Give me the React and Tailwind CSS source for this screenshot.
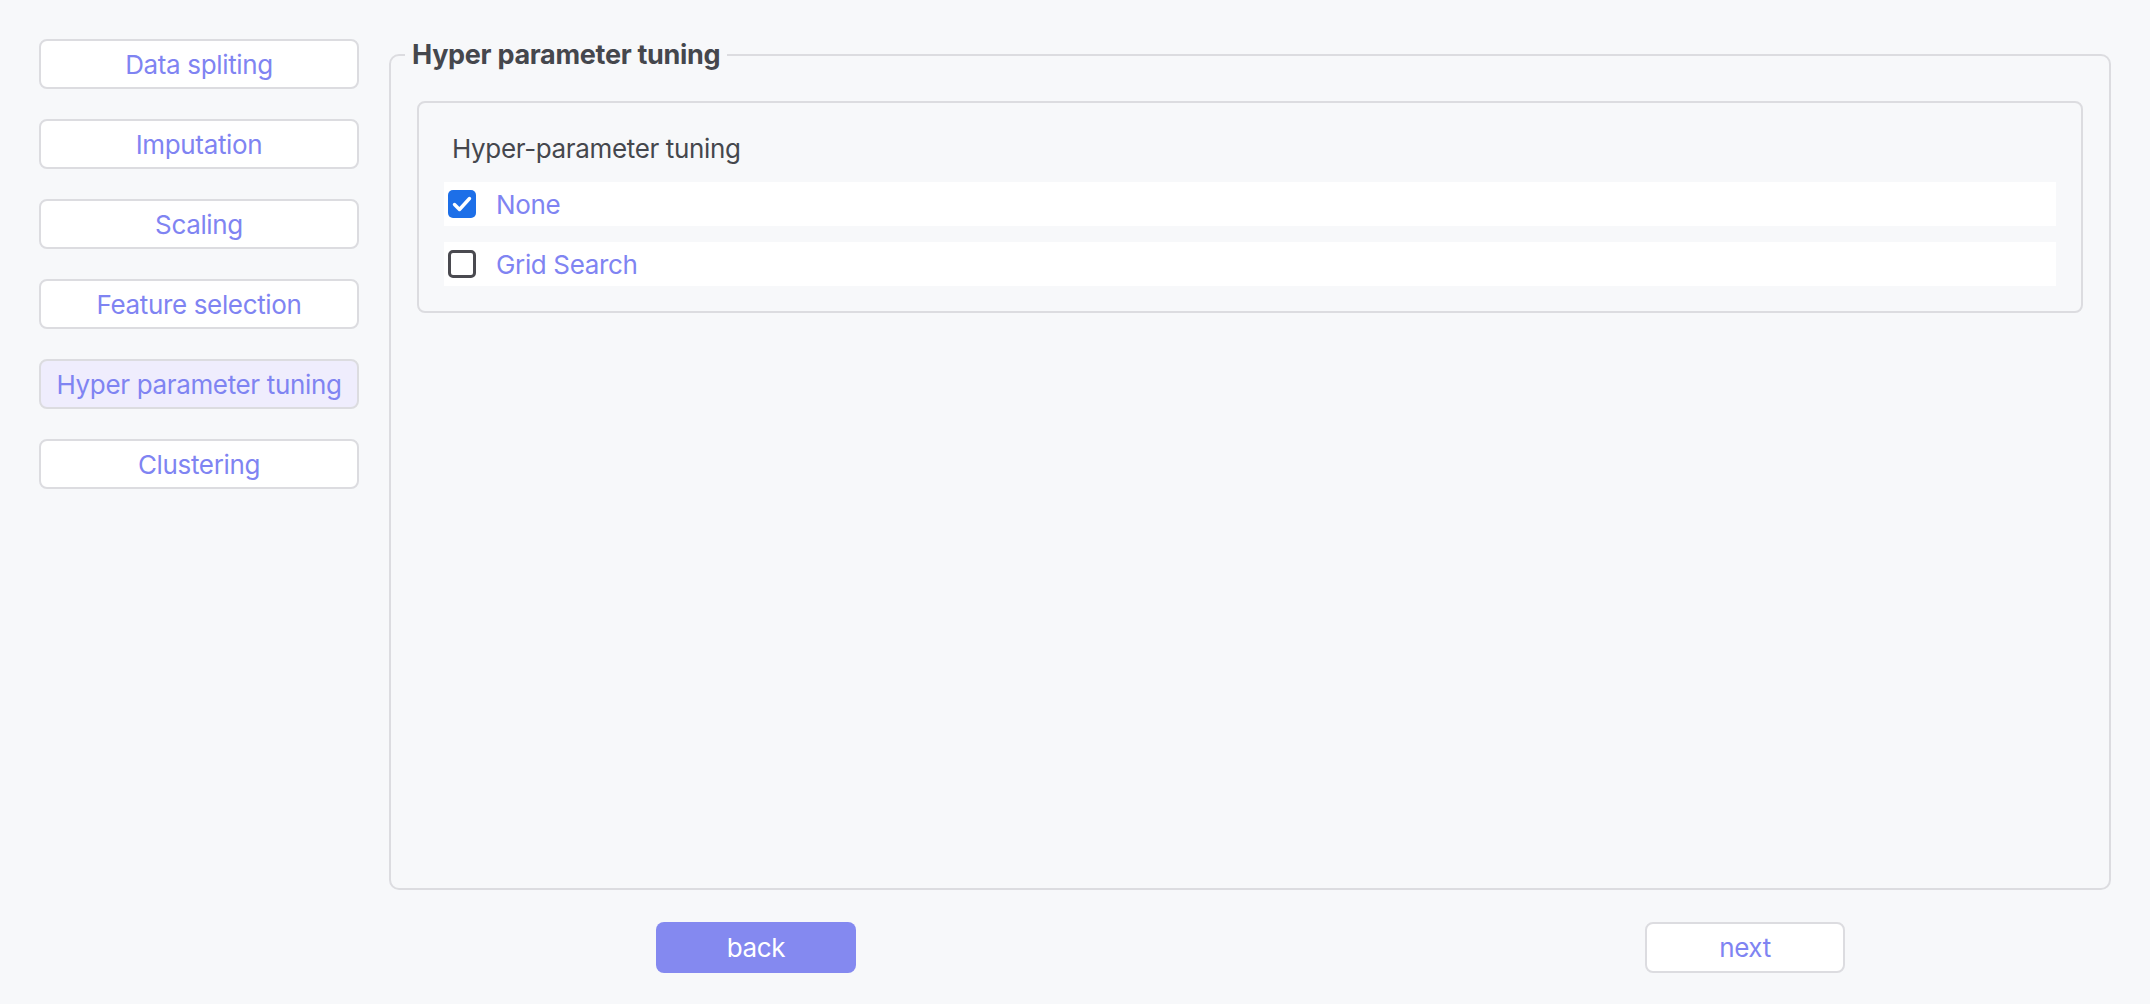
import React from "react";

const steps = [
  "Data spliting",
  "Imputation",
  "Scaling",
  "Feature selection",
  "Hyper parameter tuning",
  "Clustering",
];

function Check({ checked, label }) {
  return (
    <div className="flex h-[44px] items-center bg-white pl-[4px]">
      {checked ? (
        <div className="flex h-[28px] w-[28px] items-center justify-center rounded-[5px] bg-[#1d6fe8]">
          <svg width="28" height="28" viewBox="0 0 28 28" fill="none">
            <polyline
              points="6.5,14.5 11.5,19.5 21.5,8.5"
              stroke="white"
              strokeWidth="3.4"
              strokeLinecap="round"
              strokeLinejoin="round"
            />
          </svg>
        </div>
      ) : (
        <div className="h-[28px] w-[28px] rounded-[5px] border-[3px] border-[#4a4a50] bg-white" />
      )}
      <span className="ml-[20px] pt-[1px] text-[26px] leading-[34px] tracking-[-0.35px] text-[#7f84f2]">{label}</span>
    </div>
  );
}

export default function App() {
  return (
    <div
      className="flex h-[1004px] w-full bg-[#f7f8fa]"
      style={{ fontFamily: "Inter, 'Noto Sans', sans-serif" }}
    >
      <div className="flex w-[359px] shrink-0 flex-col gap-[30px] pl-[39px] pt-[39px]">
        {steps.map((s, i) => (
          <button
            key={s}
            className={`flex h-[50px] w-[320px] items-center justify-center rounded-[8px] border-2 border-[#dcdce0] pt-[2px] text-[26px] leading-[34px] tracking-[-0.35px] text-[#7f84f2] ${
              i === 4 ? "bg-[#efedfd]" : "bg-white"
            }`}
          >
            {s}
          </button>
        ))}
      </div>
      <div className="ml-[30px] flex w-[1722px] flex-col">
        <fieldset className="mt-[38px] h-[852px] rounded-[10px] border-2 border-[#dcdce0] px-[26px] pt-[29px]">
          <legend className="-ml-[12px] px-[7px] text-[27px] font-bold leading-[34px] tracking-[-0.3px] text-[#45474d]">
            Hyper parameter tuning
          </legend>
          <div className="rounded-[8px] border-2 border-[#dcdce0] px-[25px] pb-[25px] pt-[29px]">
            <div className="ml-[8px] text-[26px] leading-[34px] tracking-[-0.35px] text-[#45474d]">Hyper-parameter tuning</div>
            <div className="mt-[16px] flex flex-col gap-[16px]">
              <Check checked label="None" />
              <Check label="Grid Search" />
            </div>
          </div>
        </fieldset>
        <div className="mt-[32px] flex">
          <button className="ml-[267px] flex h-[51px] w-[200px] items-center justify-center rounded-[8px] bg-[#8489f0] text-[26px] tracking-[-0.35px] text-white">
            back
          </button>
          <button className="ml-[789px] flex h-[51px] w-[200px] items-center justify-center rounded-[8px] border-2 border-[#dcdce0] bg-white text-[26px] tracking-[-0.35px] text-[#7f84f2]">
            next
          </button>
        </div>
      </div>
    </div>
  );
}
